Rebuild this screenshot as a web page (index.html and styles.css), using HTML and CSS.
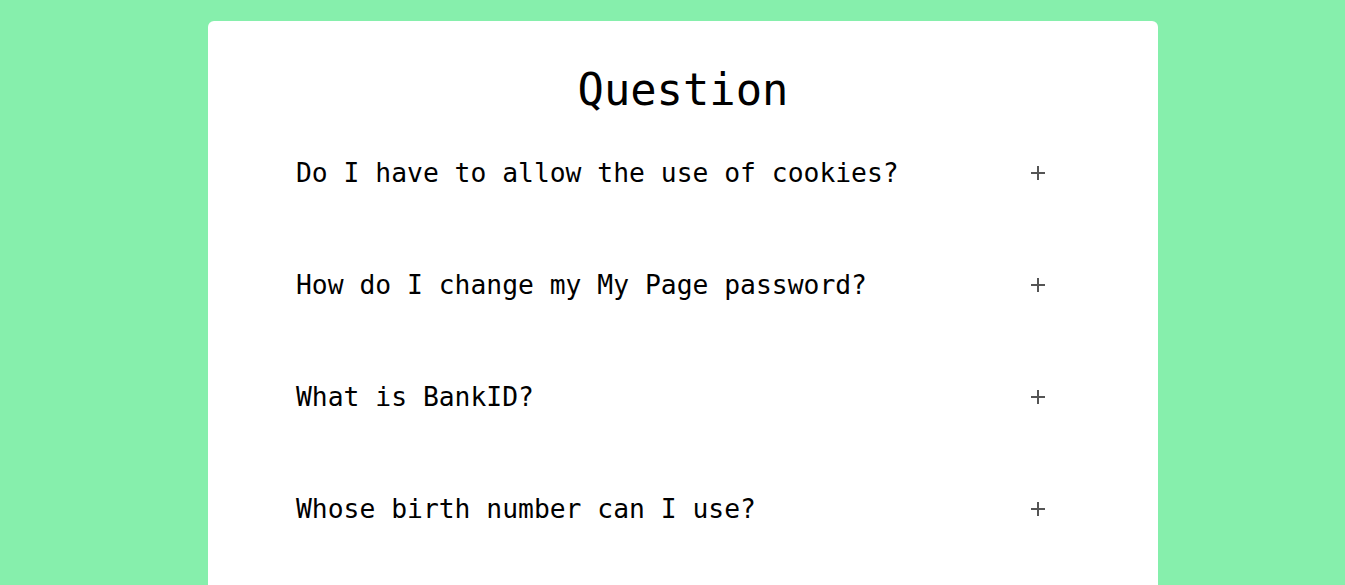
FILE: index.html
```html
<!DOCTYPE html>
<html lang="en">
<head>
<meta charset="utf-8">
<title>Question</title>
<link rel="stylesheet" href="styles.css">
</head>
<body>
<main class="page">
  <section class="card">
    <h1 class="title">Question</h1>
    <ul class="faq">
      <li class="item"><span class="q">Do I have to allow the use of cookies?</span><span class="plus"></span></li>
      <li class="item"><span class="q">How do I change my My Page password?</span><span class="plus"></span></li>
      <li class="item"><span class="q">What is BankID?</span><span class="plus"></span></li>
      <li class="item"><span class="q">Whose birth number can I use?</span><span class="plus"></span></li>
    </ul>
  </section>
</main>
</body>
</html>
```
FILE: styles.css
```css
html, body {
  margin: 0;
  padding: 0;
  background: #86efac;
  overflow: hidden;
}
.page {
  display: flex;
  padding: 21px 0 0 208px;
  height: 585px;
  box-sizing: border-box;
}
.card {
  width: 950px;
  min-height: 700px;
  background: #fff;
  border-radius: 6px;
  padding: 40px 113px 0 88px;
  box-sizing: border-box;
  font-family: "DejaVu Sans Mono", monospace;
  color: #000;
}
.title {
  margin: 0 0 0 -88px;
  width: 950px;
  text-align: center;
  font-weight: 400;
  font-size: 43.8px;
  line-height: 58px;
}
.faq {
  list-style: none;
  margin: 0;
  padding: 0;
}
.item {
  display: flex;
  justify-content: space-between;
  align-items: flex-start;
  height: 112px;
  padding-top: 38px;
  box-sizing: border-box;
}
.q {
  font-size: 26.35px;
  line-height: 32px;
}
.plus {
  position: relative;
  width: 14px;
  height: 14px;
  margin-top: 9px;
}
.plus::before, .plus::after {
  content: "";
  position: absolute;
  background: #555;
}
.plus::before {
  left: 0; right: 0; top: 6px; height: 2px;
}
.plus::after {
  top: 0; bottom: 0; left: 6px; width: 2px;
}
```
